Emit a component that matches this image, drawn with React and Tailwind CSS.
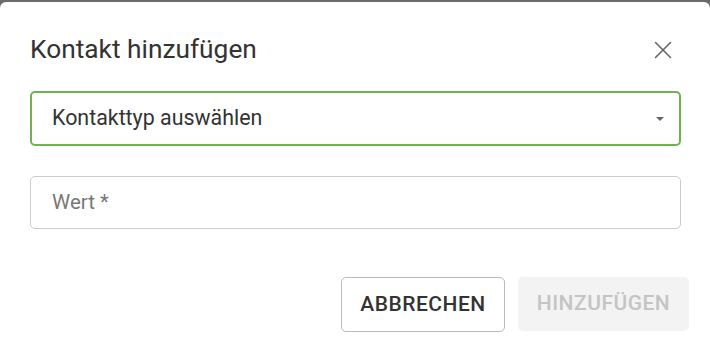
import { X } from "lucide-react";

const App = () => {
  return (
    <div className="w-[710px] h-[355px] bg-[#6b6b6b] pt-[2px] overflow-hidden" style={{ fontFamily: "Roboto, 'Liberation Sans', sans-serif" }}>
      <div className="h-[353px] bg-white rounded-t-[6px] px-[30px] pt-[32px]">
        <div className="flex items-center justify-between h-[32px]">
          <h2 className="text-[26.3px] text-[#333333] font-normal">Kontakt hinzufügen</h2>
          <button className="mr-[2px] text-[#666666]">
            <X size={30} strokeWidth={1.3} />
          </button>
        </div>
        <div className="mt-[25px] w-[651px] h-[55px] border-2 border-[#6fb350] rounded-[5px] flex items-center justify-between pl-[20px] pr-[14px]">
          <span className="text-[21.4px] text-[#333333]">Kontakttyp auswählen</span>
          <svg width="10" height="6" viewBox="0 0 10 6">
            <path d="M1 1 L9 1 L5 5 Z" fill="#666666" />
          </svg>
        </div>
        <div className="mt-[30px] w-[651px] h-[53px] border border-[#cccccc] rounded-[5px] flex items-center pl-[21px]">
          <span className="text-[20.5px] text-[#777777]">Wert *</span>
        </div>
        <div className="flex justify-end gap-[13px] mt-[48px] mr-[-9px]">
          <button className="w-[164px] h-[55px] border border-[#bbbbbb] rounded-[5px] text-[21px] font-medium text-[#333333] tracking-[0.5px]">
            ABBRECHEN
          </button>
          <button className="w-[171px] h-[54px] bg-[#f3f3f3] rounded-[5px] text-[21px] font-medium text-[#c4c4c4] tracking-[0.5px]">
            HINZUFÜGEN
          </button>
        </div>
      </div>
    </div>
  );
};

export default App;
